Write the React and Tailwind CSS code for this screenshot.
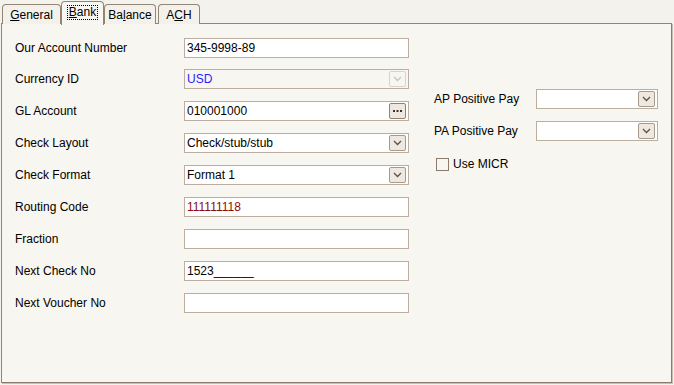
import React from 'react';

const font = { fontFamily: '"Liberation Sans", Arial, sans-serif' };

const Chevron = ({ disabled }) => (
  <span className={`flex items-center justify-center w-[17px] h-[16px] rounded-[2px] border ${disabled ? 'border-[#d8d2ca] bg-[#f7f6f2]' : 'border-[#a8998a] bg-[#ede9e1]'}`}>
    <svg width="9" height="6" viewBox="0 0 9 6">
      <path d="M1 1 L4.5 4.5 L8 1" fill="none" stroke={disabled ? '#c9c3bb' : '#5a5047'} strokeWidth="1.3" />
    </svg>
  </span>
);

const Ellipsis = () => (
  <span className="flex items-center justify-center w-[17px] h-[16px] rounded-[2px] border border-[#8f8272] bg-[#ede9e1]">
    <svg width="9" height="3" viewBox="0 0 9 3">
      <rect x="0" y="0" width="2" height="2" fill="#3a332c" />
      <rect x="3.5" y="0" width="2" height="2" fill="#3a332c" />
      <rect x="7" y="0" width="2" height="2" fill="#3a332c" />
    </svg>
  </span>
);

const Field = ({ value = '', color = 'text-black', bg = 'bg-white', addon, width = 'w-[225px]' }) => (
  <div className={`${width} h-[20px] border border-[#bbaea1] ${bg} flex items-center pl-[2px] pr-[2px]`}>
    <span className={`flex-1 text-[12px] leading-none ${color}`}>{value}</span>
    {addon}
  </div>
);

const Row = ({ label, children, className = '' }) => (
  <div className={`flex items-center h-[20px] ${className}`}>
    <span className="w-[169px] text-[12px] text-black">{label}</span>
    {children}
  </div>
);

const Tab = ({ children, active, width }) => (
  <div className={`relative border border-b-0 border-[#938575] rounded-t-[4px] text-[12px] text-black flex items-center justify-center ${width} ${active ? 'bg-[#f7f6f1] h-[24px] -mx-[2px] z-10 pb-[2px]' : 'bg-[#f3f1ea] h-[20px] mt-[3px]'}`}>
    {children}
  </div>
);

export default function App() {
  return (
    <div className="w-[674px] h-[385px] bg-[#f4f2ec] pt-[1px] pl-[1px]" style={font}>
      <div className="flex items-start pl-[1px] h-[22px] gap-[2px]">
        <Tab width="w-[59px]"><span><u>G</u>eneral</span></Tab>
        <Tab active width="w-[43px]"><span className="outline outline-1 outline-dotted outline-black px-[1px] leading-[13px]"><u>B</u>ank</span></Tab>
        <Tab width="w-[52px]"><span>Ba<u>l</u>ance</span></Tab>
        <Tab width="w-[42px]"><span>A<u>C</u>H</span></Tab>
      </div>
      <div className="w-[671px] h-[360px] bg-[#f7f6f1] border border-[#938575] border-r-[#8a7b6c] border-b-[#8a7b6c] shadow-[1px_1px_0_#c9bfb2] flex pt-[14px] pl-[13px]">
        <div className="flex flex-col gap-[12px]">
          <Row label="Our Account Number" className="-mb-[1px]"><Field value="345-9998-89" /></Row>
          <Row label="Currency ID"><Field value="USD" color="text-[#2a1cff]" bg="bg-[#f7f6f1]" addon={<Chevron disabled />} /></Row>
          <Row label="GL Account"><Field value="010001000" addon={<Ellipsis />} /></Row>
          <Row label="Check Layout"><Field value="Check/stub/stub" addon={<Chevron />} /></Row>
          <Row label="Check Format"><Field value="Format 1" addon={<Chevron />} /></Row>
          <Row label="Routing Code"><Field value="111111118" color="text-[#8b0a0a]" /></Row>
          <Row label="Fraction"><Field /></Row>
          <Row label="Next Check No"><Field value="1523______" /></Row>
          <Row label="Next Voucher No"><Field /></Row>
        </div>
        <div className="flex flex-col ml-[25px] mt-[51px] gap-[12px]">
          <div className="flex items-center h-[20px]">
            <span className="w-[102px] text-[12px] text-black">AP Positive Pay</span>
            <Field width="w-[122px]" addon={<Chevron />} />
          </div>
          <div className="flex items-center h-[20px]">
            <span className="w-[102px] text-[12px] text-black">PA Positive Pay</span>
            <Field width="w-[122px]" addon={<Chevron />} />
          </div>
          <div className="flex items-center gap-[4px] pl-[2px] mt-[2px]">
            <span className="w-[13px] h-[13px] border border-[#8a7b6c] bg-[#f7f6f1]" />
            <span className="text-[12px] text-black">Use MICR</span>
          </div>
        </div>
      </div>
    </div>
  );
}
